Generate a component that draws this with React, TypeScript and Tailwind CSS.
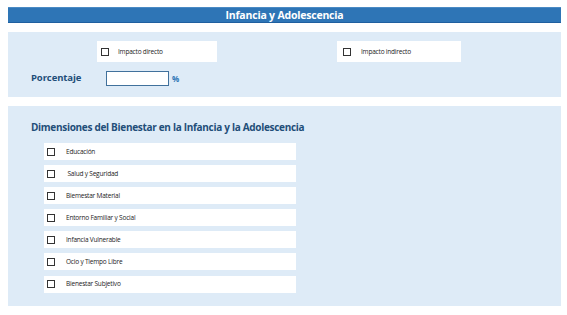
import React from "react";

const Box: React.FC = () => (
  <span className="inline-block w-[8px] h-[8px] border border-[#333] bg-white shrink-0" />
);

const dimensiones = [
  "Educación",
  " Salud y Seguridad",
  "Biemestar Material",
  "Entorno Familiar y Social",
  "Infancia Vulnerable",
  "Ocio y Tiempo Libre",
  "Bienestar Subjetivo",
];

export default function App() {
  return (
    <div
      className="w-[567px] h-[315px] bg-white pt-[7px] pl-[8px] pr-[6px]"
      style={{ fontFamily: '"Open Sans", "Noto Sans", sans-serif' }}
    >
      {/* Header */}
      <div className="h-[16px] bg-[#2e75b6] border-b border-[#1f5f9f] border-t border-t-[#4a8ac4] flex items-center justify-center">
        <span className="text-white font-bold text-[10.5px] leading-none tracking-[-0.2px]">
          Infancia y Adolescencia
        </span>
      </div>

      {/* Impacto */}
      <div className="mt-[9px] h-[65px] bg-[#deebf7] pt-[9px]">
        <div className="flex pl-[89px] gap-[120px]">
          <div className="w-[120px] h-[21px] bg-white flex items-center pl-[4px] gap-[9px]">
            <Box />
            <span className="text-[6.5px] text-[#222] tracking-[-0.2px]">Impacto directo</span>
          </div>
          <div className="w-[124px] h-[21px] bg-white flex items-center pl-[6px] gap-[10px]">
            <Box />
            <span className="text-[6.5px] text-[#222] tracking-[-0.2px]">Impacto indirecto</span>
          </div>
        </div>
        <div className="flex items-center mt-[9px] pl-[23px]">
          <span className="w-[75px] text-[9.5px] font-bold text-[#1f4e79] tracking-[-0.1px]">Porcentaje</span>
          <span className="w-[63px] h-[15px] bg-white border border-[#41719c]" />
          <span className="ml-[3px] text-[8px] font-bold text-[#2e75b6]">%</span>
        </div>
      </div>

      {/* Dimensiones */}
      <div className="mt-[9px] h-[200px] bg-[#deebf7] pt-[13px]">
        <div className="pl-[23px] text-[10px] leading-[16px] font-bold text-[#1f4e79] tracking-[-0.3px]">
          Dimensiones del Bienestar en la Infancia y la Adolescencia
        </div>
        <div className="mt-[8px] pl-[36px] flex flex-col gap-[5.1px]">
          {dimensiones.map((d) => (
            <div
              key={d}
              className="w-[252px] h-[17px] bg-white flex items-center pl-[3px] gap-[11px]"
            >
              <Box />
              <span className="text-[6.5px] text-[#222] whitespace-pre tracking-[-0.2px]">{d}</span>
            </div>
          ))}
        </div>
      </div>
    </div>
  );
}
